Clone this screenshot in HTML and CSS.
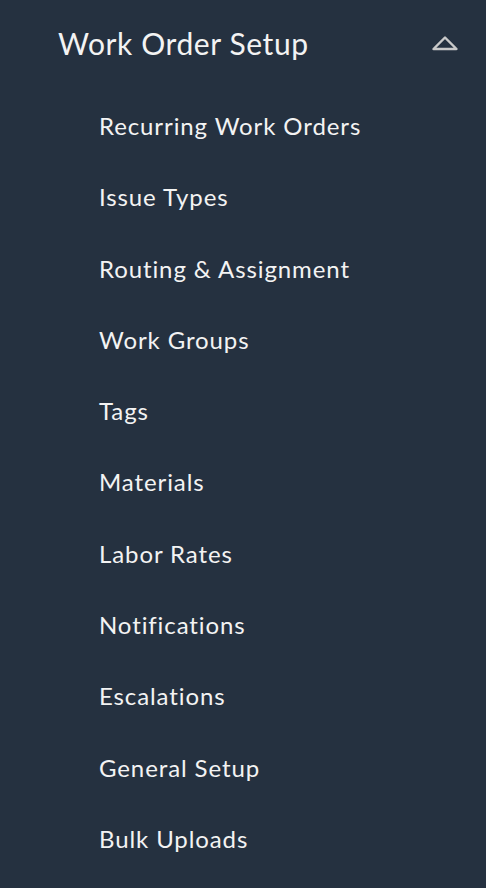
FILE: index.html
```html
<!DOCTYPE html>
<html>
<head>
<meta charset="utf-8">
<link rel="stylesheet" href="styles.css">
</head>
<body>
<nav class="menu">
  <div class="menu-header">
    <span class="menu-title">Work Order Setup</span>
    <svg class="chevron" width="28" height="18" viewBox="0 0 28 18">
      <path d="M2.5 15 L14 3.5 L25.5 15 Z" fill="none" stroke="#c9c9c9" stroke-width="2.4" stroke-linejoin="round"/>
    </svg>
  </div>
  <ul class="menu-list">
    <li class="menu-item">Recurring Work Orders</li>
    <li class="menu-item">Issue Types</li>
    <li class="menu-item">Routing &amp; Assignment</li>
    <li class="menu-item">Work Groups</li>
    <li class="menu-item">Tags</li>
    <li class="menu-item">Materials</li>
    <li class="menu-item">Labor Rates</li>
    <li class="menu-item">Notifications</li>
    <li class="menu-item">Escalations</li>
    <li class="menu-item">General Setup</li>
    <li class="menu-item">Bulk Uploads</li>
  </ul>
</nav>
</body>
</html>
```
FILE: styles.css
```css
html, body {
  margin: 0;
  padding: 0;
  background: #253140;
  height: 100%;
  overflow: hidden;
}
.menu {
  font-family: Lato, "Noto Sans", sans-serif;
  color: #f3f3f3;
  font-variant-ligatures: none;
}
.menu-header {
  display: flex;
  align-items: center;
  justify-content: space-between;
  height: 85px;
  padding: 0 27px 0 58px;
}
.menu-title {
  font-size: 30px;
  line-height: 1;
  letter-spacing: 0.6px;
}
.chevron {
  display: block;
}
.menu-list {
  list-style: none;
  margin: 0;
  padding: 5px 0 0 99px;
}
.menu-item {
  font-size: 24px;
  height: 71.3px;
  line-height: 71.3px;
  letter-spacing: 0.9px;
}
```
